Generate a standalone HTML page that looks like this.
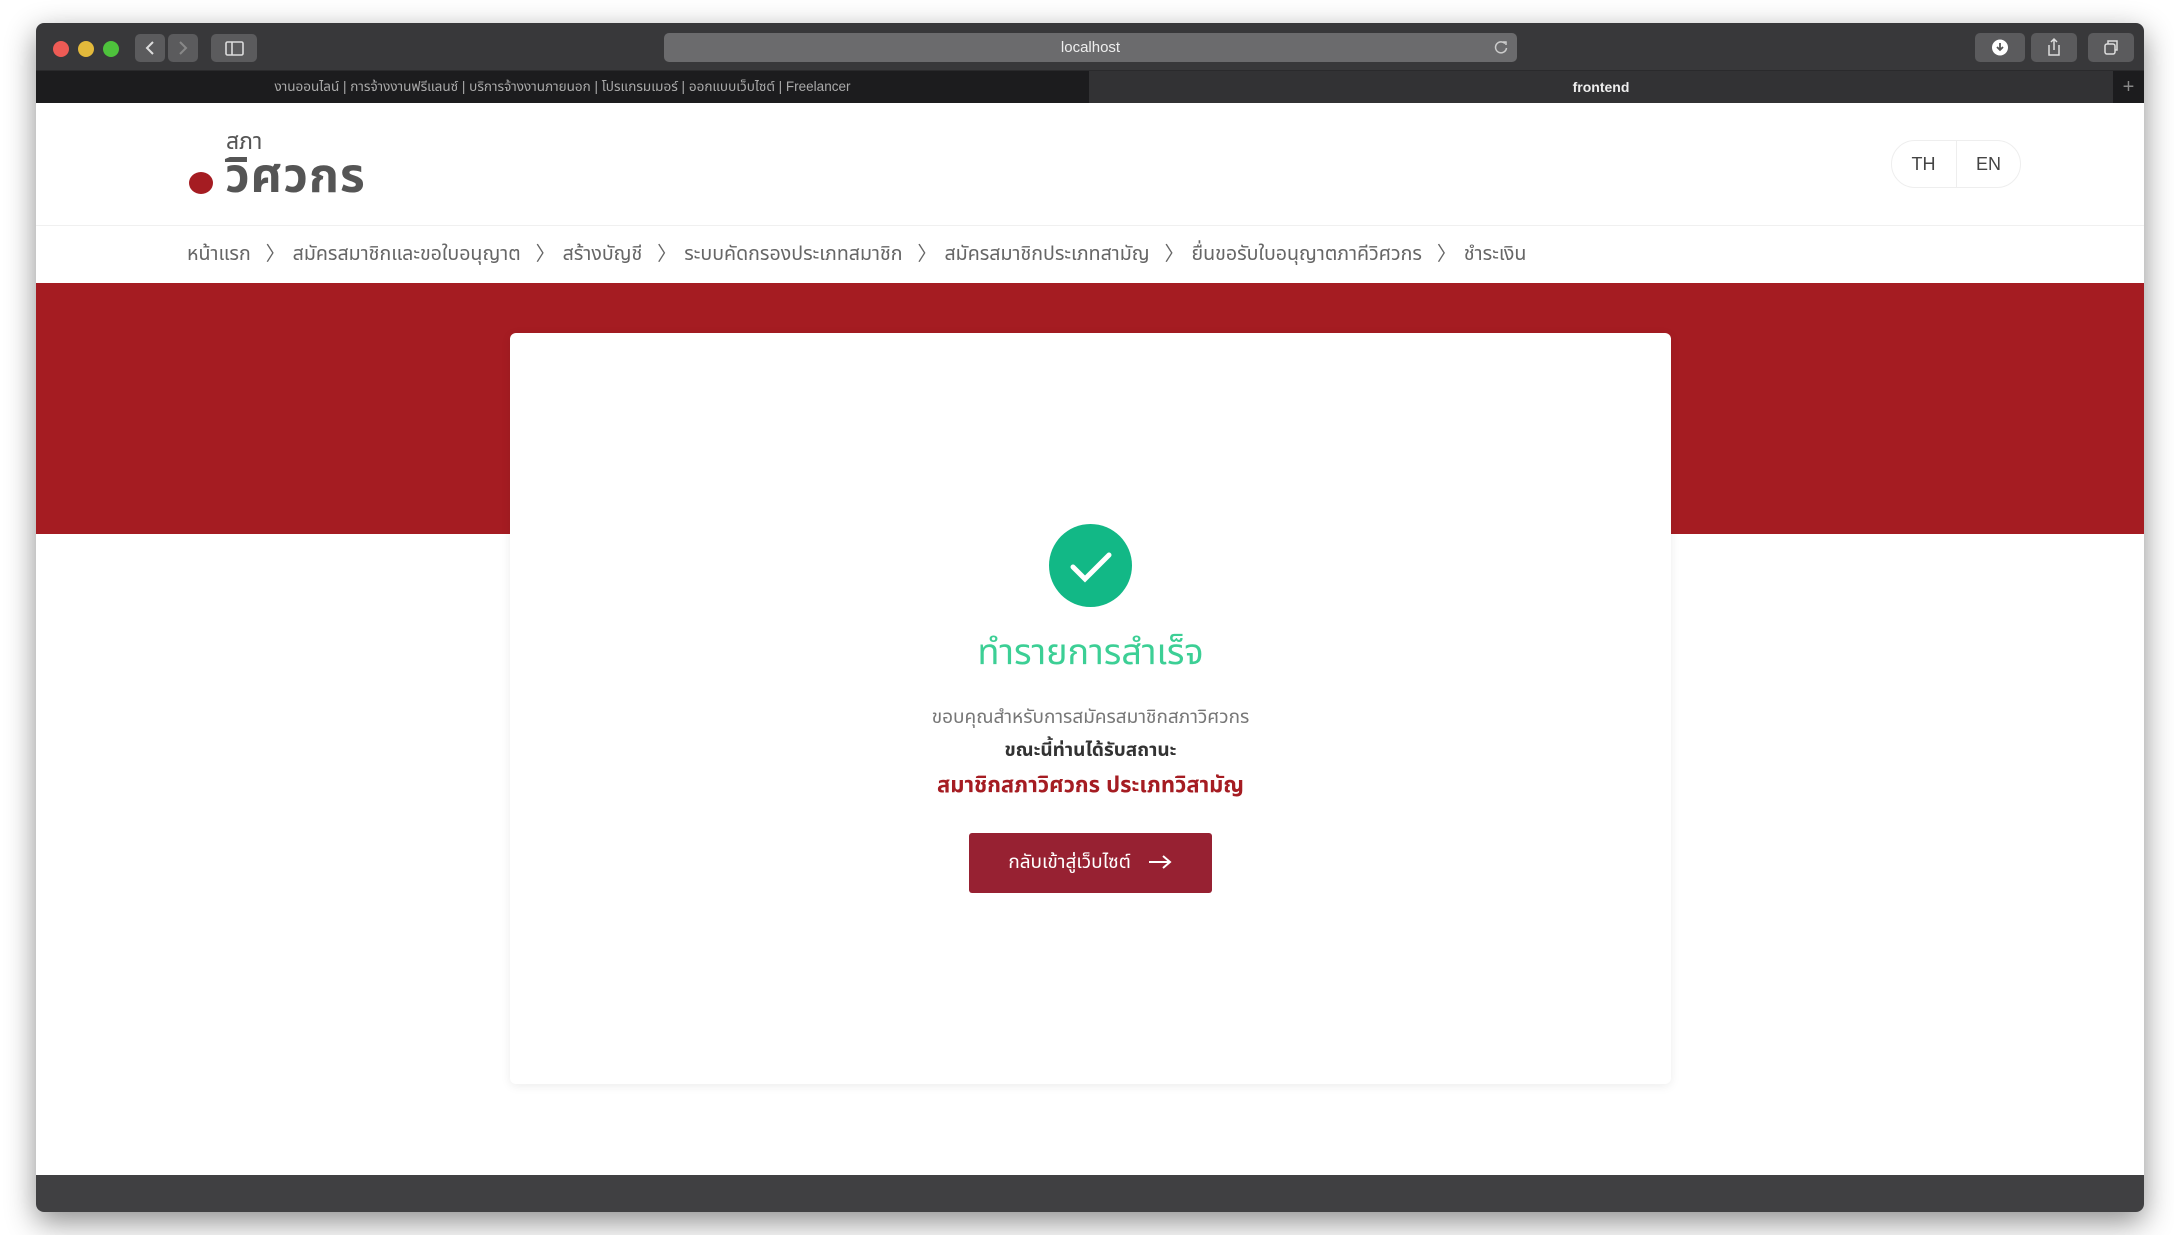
<!DOCTYPE html>
<html><head><meta charset="utf-8">
<style>
*{margin:0;padding:0;box-sizing:border-box}
body{width:2174px;height:1235px;background:#fff;position:relative;overflow:hidden;font-family:"Liberation Sans","Noto Sans CJK SC",sans-serif}
.abs{position:absolute}
.win{left:36px;top:23px;width:2108px;height:1189px;border-radius:8px;overflow:hidden;box-shadow:0 10px 30px rgba(0,0,0,.45);background:#fff}
.tool{left:0;top:0;width:2108px;height:47px;background:#38383a}
.tabs{left:0;top:47px;width:2108px;height:33px;background:#1c1c1e;border-top:1px solid #2a2a2c}
.btn{background:#5b5b5d;border-radius:5px}
.t{font-family:"Liberation Sans","Noto Sans Thai","Noto Sans CJK SC",sans-serif}
</style></head><body>
<div class="abs win">
  <div class="abs tool">
    <div class="abs" style="left:17px;top:18px;width:16px;height:16px;border-radius:50%;background:#ee5b55"></div>
    <div class="abs" style="left:42px;top:18px;width:16px;height:16px;border-radius:50%;background:#e3b93b"></div>
    <div class="abs" style="left:67px;top:18px;width:16px;height:16px;border-radius:50%;background:#4ec23c"></div>
    <div class="abs btn" style="left:99px;top:11px;width:30px;height:28px"><svg width="30" height="28"><path d="M18 8l-6 6 6 6" stroke="#ddd" stroke-width="2" fill="none"/></svg></div>
    <div class="abs btn" style="left:132px;top:11px;width:30px;height:28px"><svg width="30" height="28"><path d="M12 8l6 6-6 6" stroke="#888" stroke-width="2" fill="none"/></svg></div>
    <div class="abs btn" style="left:175px;top:11px;width:46px;height:28px"><svg width="46" height="28"><rect x="15" y="8" width="17" height="13" rx="1.5" stroke="#ddd" stroke-width="1.6" fill="none"/><path d="M21 8v13" stroke="#ddd" stroke-width="1.6"/></svg></div>
    <div class="abs" style="left:628px;top:10px;width:853px;height:29px;background:#6b6b6d;border-radius:5px;color:#eee;font-size:15px;text-align:center;line-height:29px">localhost
      <svg class="abs" style="right:8px;top:6px" width="16" height="16"><path d="M12 4.5A5.5 5.5 0 1 0 13.5 9" stroke="#ccc" stroke-width="1.5" fill="none"/><path d="M10 3h3v3" stroke="#ccc" stroke-width="1.5" fill="none"/></svg></div>
    <div class="abs btn" style="left:1939px;top:10px;width:50px;height:29px"><svg width="50" height="29"><circle cx="25" cy="14.5" r="8" fill="#fff"/><path d="M25 10v7M22 14l3 3 3-3" stroke="#555" stroke-width="1.8" fill="none"/></svg></div>
    <div class="abs btn" style="left:1995px;top:10px;width:46px;height:29px"><svg width="46" height="29"><path d="M18 12v10h10V12M23 6v11M20 9l3-3 3 3" stroke="#ddd" stroke-width="1.5" fill="none"/></svg></div>
    <div class="abs btn" style="left:2052px;top:10px;width:46px;height:29px"><svg width="46" height="29"><rect x="17" y="11" width="10" height="10" rx="2" stroke="#ddd" stroke-width="1.5" fill="none"/><path d="M20 11V8h9v9h-2" stroke="#ddd" stroke-width="1.5" fill="none"/></svg></div>
  </div>
  <div class="abs tabs">
    <div class="abs t" style="left:0;top:0;width:1053px;height:32px;color:#aaa;font-size:13.5px;text-align:center;line-height:32px">งานออนไลน์ | การจ้างงานฟรีแลนซ์ | บริการจ้างงานภายนอก | โปรแกรมเมอร์ | ออกแบบเว็บไซต์ | Freelancer</div>
    <div class="abs" style="left:1053px;top:0;width:1024px;height:32px;background:#323234;color:#eee;font-size:14px;text-align:center;line-height:32px;font-weight:bold">frontend</div>
    <div class="abs" style="left:2077px;top:0;width:31px;height:32px;color:#888;font-size:20px;text-align:center;line-height:32px">+</div>
  </div>
  <div class="abs" style="left:153px;top:149px;width:24px;height:22px;border-radius:50%;background:#a51c22"></div>
  <div class="abs t" style="left:190px;top:105px;font-size:23px;color:#555;line-height:26px">สภา</div>
  <div class="abs t" style="left:189px;top:124px;font-size:48px;color:#555;line-height:60px;letter-spacing:1px;font-weight:bold">วิศวกร</div>
  <div class="abs" style="left:1855px;top:117px;width:130px;height:48px;border:1px solid #eee;border-radius:24px"></div>
  <div class="abs" style="left:1920px;top:117px;width:1px;height:48px;background:#eee"></div>
  <div class="abs" style="left:1855px;top:117px;width:65px;height:48px;line-height:48px;text-align:center;font-size:18px;color:#444">TH</div>
  <div class="abs" style="left:1920px;top:117px;width:65px;height:48px;line-height:48px;text-align:center;font-size:18px;color:#444">EN</div>
  <div class="abs" style="left:0;top:202px;width:2108px;height:1px;background:#f0f0f0"></div>
  <div class="abs t" style="left:151px;top:217px;font-size:19.6px;color:#666;line-height:28px;white-space:nowrap;word-spacing:2px">หน้าแรก &nbsp;〉 สมัครสมาชิกและขอใบอนุญาต &nbsp;〉 สร้างบัญชี &nbsp;〉 ระบบคัดกรองประเภทสมาชิก &nbsp;〉 สมัครสมาชิกประเภทสามัญ &nbsp;〉 ยื่นขอรับใบอนุญาตภาคีวิศวกร &nbsp;〉 ชำระเงิน</div>
  <div class="abs" style="left:0;top:260px;width:2108px;height:251px;background:#a51c22"></div>
  <div class="abs" style="left:474px;top:310px;width:1161px;height:751px;background:#fff;border-radius:6px;box-shadow:0 2px 10px rgba(0,0,0,.08)"></div>
  <div class="abs" style="left:1013px;top:501px;width:83px;height:83px;border-radius:50%;background:#12b886"><svg width="83" height="83"><path d="M24 43l12 12 24-24" stroke="#fff" stroke-width="5" fill="none" stroke-linecap="round"/></svg></div>
  <div class="abs t" style="left:474px;top:604px;width:1161px;text-align:center;font-size:36px;color:#3ccf95;line-height:50px">ทำรายการสำเร็จ</div>
  <div class="abs t" style="left:474px;top:680px;width:1161px;text-align:center;font-size:19px;color:#777;line-height:30px">ขอบคุณสำหรับการสมัครสมาชิกสภาวิศวกร</div>
  <div class="abs t" style="left:474px;top:713px;width:1161px;text-align:center;font-size:19px;color:#333;font-weight:bold;line-height:30px">ขณะนี้ท่านได้รับสถานะ</div>
  <div class="abs t" style="left:474px;top:745px;width:1161px;text-align:center;font-size:22px;color:#a51c22;font-weight:bold;line-height:34px">สมาชิกสภาวิศวกร ประเภทวิสามัญ</div>
  <div class="abs t" style="left:933px;top:810px;width:243px;height:60px;background:#972132;border-radius:3px;color:#fff;font-size:19px;line-height:60px;text-align:center">กลับเข้าสู่เว็บไซต์ &nbsp;&nbsp;<svg width="26" height="16" style="vertical-align:-2px"><path d="M2 8h21M16 2l7 6-7 6" stroke="#fff" stroke-width="2" fill="none"/></svg></div>
  <div class="abs" style="left:0;top:1152px;width:2108px;height:37px;background:#404042"></div>
</div>
</body></html>
